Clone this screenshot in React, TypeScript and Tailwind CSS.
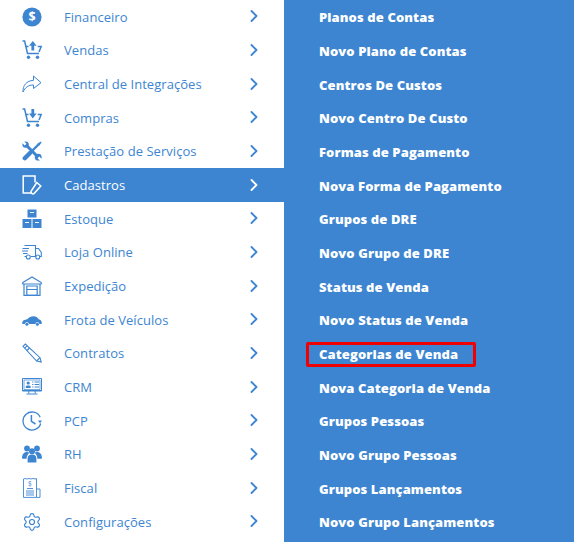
import React from 'react';
import { ChevronRight, Settings } from 'lucide-react';

const Cart = ({ down }: { down?: boolean }) => (
  <svg viewBox="0 0 20 20" className="w-5 h-5" fill="none" stroke="currentColor">
    <path d="M0.5 1 H2.6 L5.5 13.5 H17" strokeWidth="1.5" />
    <path d="M3.6 6.5 H6.5 M15.7 6.5 H19.2 L17 12" strokeWidth="1.5" />
    <circle cx="6.5" cy="17.3" r="1.7" fill="currentColor" stroke="none" />
    <circle cx="15.5" cy="17.3" r="1.7" fill="currentColor" stroke="none" />
    {down ? (
      <path d="M9.4 1 H12.2 V5.5 H14.6 L10.8 10.4 L7 5.5 H9.4 Z" fill="currentColor" stroke="none" />
    ) : (
      <path d="M10.8 1 L14.6 5.8 H12.2 V10.4 H9.4 V5.8 H7 Z" fill="currentColor" stroke="none" />
    )}
  </svg>
);

const icons: Record<string, React.ReactNode> = {
  money: (
    <svg viewBox="0 0 20 20" className="w-5 h-5">
      <circle cx="10" cy="10" r="9.6" fill="currentColor" />
      <text x="10" y="14.4" textAnchor="middle" fontSize="12.5" fontWeight="700" fontFamily="Open Sans" fill="#fff">$</text>
    </svg>
  ),
  share: (
    <svg viewBox="0 0 20 20" className="w-5 h-5" fill="none" stroke="currentColor" strokeWidth="1">
      <path d="M11.5 2 L19 8.7 L11.5 14.5 V11 C6.5 10.8 3 13.5 1 18 C0.6 11.5 4.5 6.8 11.5 6.3 Z" />
    </svg>
  ),
  tools: (
    <svg viewBox="0 0 20 20" className="w-5 h-5" fill="none" stroke="currentColor">
      <path d="M4 4 L16 16" strokeWidth="3" />
      <circle cx="3.6" cy="3.6" r="3.2" fill="currentColor" stroke="none" />
      <circle cx="16.2" cy="16.2" r="3.4" fill="currentColor" stroke="none" />
      <path d="M0 0 L3.6 3.6 M20 20 L16.4 16.4" stroke="#fff" strokeWidth="2.4" />
      <path d="M17 3 L8 12" strokeWidth="2.4" />
      <path d="M8 12 L2.8 17.2" strokeWidth="4.4" strokeLinecap="round" />
      <path d="M15.5 2.5 L19 0.5 L19.6 1.2 L17.5 4.5 Z" fill="currentColor" stroke="none" />
    </svg>
  ),
  edit: (
    <svg viewBox="0 0 20 20" className="w-5 h-5" fill="none" stroke="currentColor" strokeWidth="1.5">
      <path d="M10 18 H1.2 V1 H13 V7.5" />
      <path d="M14.8 7.5 L18.8 11 L12 18.6 C10.5 19.6 8.4 18 9.2 16 Z" />
    </svg>
  ),
  boxes: (
    <svg viewBox="0 0 20 20" className="w-5 h-5" fill="currentColor">
      <path fillRule="evenodd" d="M5.5 0.5 H14.5 V8.5 H5.5 Z M8 3 V4 H12 V3 Z" />
      <path fillRule="evenodd" d="M0.5 10 H9.5 V19 H0.5 Z M3 13 V14 H7 V13 Z" />
      <path fillRule="evenodd" d="M10.5 10 H19.5 V19 H10.5 Z M13 13 V14 H17 V13 Z" />
    </svg>
  ),
  truck: (
    <svg viewBox="0 0 20 20" className="w-5 h-5" fill="none" stroke="currentColor" strokeWidth="1.1">
      <path d="M2.5 3.5 H13.5 V14.5 H9 M4 14.5 H2.5" />
      <path d="M13.5 6.5 H16.5 L19.3 10.5 V14.5 H17.5 M13.5 14.5 H14" />
      <path d="M0.5 6.5 H7 M0 9 H6 M1 11.5 H5.5" strokeWidth="1.2" />
      <circle cx="6.3" cy="15" r="2" />
      <circle cx="15.8" cy="15" r="2" />
    </svg>
  ),
  warehouse: (
    <svg viewBox="0 0 20 20" className="w-5 h-5" fill="none" stroke="currentColor" strokeWidth="1.2">
      <path d="M0.8 6.5 L10 1 L19.2 6.5 V8 H0.8 Z" />
      <path d="M2 8 V19.4 H18 V8" />
      <path d="M4.8 10 H15.2 V19.4 H4.8 Z M4.8 13.5 H15.2" />
    </svg>
  ),
  car: (
    <svg viewBox="0 0 20 20" className="w-5 h-5" fill="currentColor">
      <path d="M0.3 12.5 C0.3 10.5 2.5 9.6 5.2 9.2 C7 7.3 9 6.3 11.5 6.3 C14 6.3 15.5 7.6 16.7 9.2 C18.4 9.6 19.7 10.5 19.7 12.6 V14 H17.4 C17 11.6 13.8 11.6 13.4 14 H7 C6.6 11.6 3.2 11.6 2.8 14 H0.3 Z" />
      <circle cx="4.9" cy="14.3" r="1.5" />
      <circle cx="15.4" cy="14.3" r="1.5" />
    </svg>
  ),
  pencil: (
    <svg viewBox="0 0 20 20" className="w-5 h-5" fill="none" stroke="currentColor" strokeWidth="1.1">
      <path d="M1 3.3 L3.3 1 L18 14.7 L19.2 19 L14.6 18 Z" />
      <path d="M2.7 5.2 L5.2 2.7 M5 7.5 L7.4 5 M14.6 18 L18 14.7" />
    </svg>
  ),
  crm: (
    <svg viewBox="0 0 20 20" className="w-5 h-5" fill="none" stroke="currentColor" strokeWidth="1">
      <path d="M0.5 1.5 H19.5 V14 H0.5 Z" />
      <path d="M2 3 H18 V12.5 H2 Z" strokeWidth="0.7" />
      <path d="M0.5 13.5 H19.5 M6.8 14 V16.5 M13.2 14 V16.5 M4.5 17 H15.5" />
      <circle cx="6.2" cy="6" r="1.6" fill="currentColor" stroke="none" />
      <path d="M3.8 11 V9.4 C3.8 8.2 8.6 8.2 8.6 9.4 V11 Z" fill="currentColor" stroke="none" />
      <path d="M10.2 5 H11.4 M12.6 5 H17 M10.2 7.5 H11.4 M12.6 7.5 H17 M10.2 10 H11.4 M12.6 10 H17" />
    </svg>
  ),
  clock: (
    <svg viewBox="0 0 20 20" className="w-5 h-5" fill="none" stroke="currentColor" strokeWidth="1.3">
      <path d="M18.2 6.2 A9 9 0 1 0 18.7 12.5" />
      <path d="M9.4 4 V10.4 L13.5 13" strokeWidth="1.5" />
      <path d="M16 9.6 H20 L18 12.2 Z" fill="currentColor" stroke="none" />
    </svg>
  ),
  people: (
    <svg viewBox="0 0 20 20" className="w-5 h-5" fill="currentColor">
      <circle cx="5" cy="4.5" r="2.9" />
      <circle cx="15" cy="4.5" r="2.9" />
      <path d="M0 14.5 C0 9.5 2.5 8 5 8 C6 8 6.8 8.2 7.5 8.7 C5.6 10.2 4.6 12.2 4.6 14.8 C2.5 14.8 1 14.8 0 14.5 Z" />
      <path d="M20 14.5 C20 9.5 17.5 8 15 8 C14 8 13.2 8.2 12.5 8.7 C14.4 10.2 15.4 12.2 15.4 14.8 C17.5 14.8 19 14.8 20 14.5 Z" />
      <circle cx="10" cy="7.2" r="3" />
      <path d="M5.6 18.4 V15 C5.6 11.5 7.5 10.6 10 10.6 C12.5 10.6 14.4 11.5 14.4 15 V18.4 Z" />
    </svg>
  ),
  doc: (
    <svg viewBox="0 0 20 20" className="w-5 h-5" fill="none" stroke="currentColor" strokeWidth="0.9">
      <path d="M1.5 1 L3 0.5 L5 1 L7 0.5 L9 1 L11 0.5 L13 1 L14.5 0.5 V19.4 H1.5 Z" />
      <path d="M14.5 11 H18 V19.4 H14.5" />
      <path d="M5 10.5 H11 M4 13 H12 M4 15 H12 M4 17 H12" />
      <text x="8" y="8.4" textAnchor="middle" fontSize="6.5" fontFamily="Open Sans" fill="currentColor" stroke="none">$</text>
    </svg>
  ),
};

const menu: { label: string; icon: React.ReactNode; active?: boolean }[] = [
  { label: 'Financeiro', icon: icons.money },
  { label: 'Vendas', icon: <Cart /> },
  { label: 'Central de Integrações', icon: icons.share },
  { label: 'Compras', icon: <Cart down /> },
  { label: 'Prestação de Serviços', icon: icons.tools },
  { label: 'Cadastros', icon: icons.edit, active: true },
  { label: 'Estoque', icon: icons.boxes },
  { label: 'Loja Online', icon: icons.truck },
  { label: 'Expedição', icon: icons.warehouse },
  { label: 'Frota de Veículos', icon: icons.car },
  { label: 'Contratos', icon: icons.pencil },
  { label: 'CRM', icon: icons.crm },
  { label: 'PCP', icon: icons.clock },
  { label: 'RH', icon: icons.people },
  { label: 'Fiscal', icon: icons.doc },
  { label: 'Configurações', icon: <Settings className="w-5 h-5" strokeWidth={1.4} /> },
];

const submenu = [
  'Planos de Contas',
  'Novo Plano de Contas',
  'Centros De Custos',
  'Novo Centro De Custo',
  'Formas de Pagamento',
  'Nova Forma de Pagamento',
  'Grupos de DRE',
  'Novo Grupo de DRE',
  'Status de Venda',
  'Novo Status de Venda',
  'Categorias de Venda',
  'Nova Categoria de Venda',
  'Grupos Pessoas',
  'Novo Grupo Pessoas',
  'Grupos Lançamentos',
  'Novo Grupo Lançamentos',
];

export default function App() {
  return (
    <div className="flex w-[574px] h-[542px] overflow-hidden bg-white font-['Open_Sans',sans-serif] text-[13px]">
      <ul className="w-[284px] shrink-0">
        {menu.map((item) => (
          <li
            key={item.label}
            className={`flex items-center h-[33.67px] pl-[22px] pr-[20px] tracking-[0.05px] ${
              item.active ? 'bg-[#3d85d1] text-white' : 'text-[#3d85d1]'
            }`}
          >
            <span className="w-[42px] shrink-0">{item.icon}</span>
            <span className="flex-1 pt-[1.4px]">{item.label}</span>
            <ChevronRight className="w-5 h-5 -mt-[1px]" strokeWidth={2.2} />
          </li>
        ))}
      </ul>
      <ul className="flex-1 bg-[#3d85d1] pl-[35px] text-white font-extrabold">
        {submenu.map((label) => (
          <li key={label} className="relative flex items-center h-[33.67px] pt-[2.6px] tracking-[0.1px]">
            {label}
            {label === 'Categorias de Venda' && (
              <span className="absolute left-[-13px] top-[5px] w-[170px] h-[25px] border-[3px] border-[#f00000] rounded-[2px]" />
            )}
          </li>
        ))}
      </ul>
    </div>
  );
}
